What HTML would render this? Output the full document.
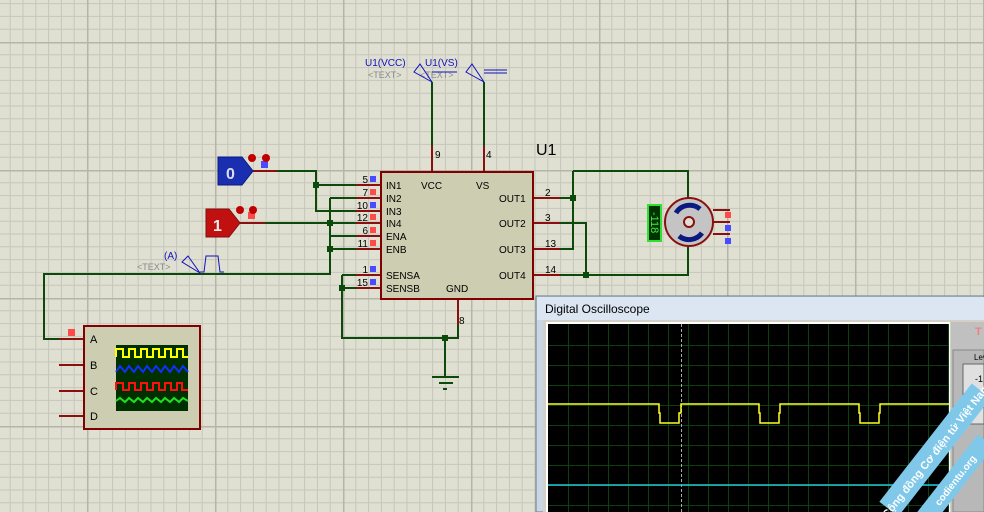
<!DOCTYPE html>
<html><head><meta charset="utf-8"><style>
html,body{margin:0;padding:0;width:984px;height:512px;overflow:hidden;background:#dfdfd2;}
svg{display:block;font-family:"Liberation Sans",sans-serif;}
</style></head><body>
<svg width="984" height="512" viewBox="0 0 984 512" xmlns="http://www.w3.org/2000/svg">
<defs>
<pattern id="g" x="87" y="42" width="128" height="128" patternUnits="userSpaceOnUse">
<rect width="128" height="128" fill="#dfdfd2"/>
<g stroke="#c6c6ba" stroke-width="1">
<path d="M12.8 0V128M25.6 0V128M38.4 0V128M51.2 0V128M64 0V128M76.8 0V128M89.6 0V128M102.4 0V128M115.2 0V128"/>
<path d="M0 12.8H128M0 25.6H128M0 38.4H128M0 51.2H128M0 64H128M0 76.8H128M0 89.6H128M0 102.4H128M0 115.2H128"/>
</g>
<path d="M0.5 0V128M0 0.5H128" stroke="#b4b4a8" stroke-width="2"/>
</pattern>
</defs>
<rect width="984" height="512" fill="url(#g)"/>

<!-- green wires -->
<g stroke="#0b4a0b" stroke-width="2" fill="none">
<path d="M277 171H316V211H356M316 185H356"/>
<path d="M265 223H356M330 198H356M330 198V274H44V339H59M330 236H356M330 249H356"/>
<path d="M342 275H356M342 275V338H458V325M342 288H356M445 338V377"/>
<path d="M432 82V146M484 82V146"/>
<path d="M560 198H573M573 171V249H560M573 171H688V198M560 223H586V275M560 275H688V247"/>
</g>
<g fill="#0b4a0b">
<rect x="313" y="182" width="6" height="6"/><rect x="327" y="220" width="6" height="6"/><rect x="327" y="246" width="6" height="6"/>
<rect x="339" y="285" width="6" height="6"/><rect x="442" y="335" width="6" height="6"/><rect x="570" y="195" width="6" height="6"/><rect x="583" y="272" width="6" height="6"/>
</g>
<!-- ground -->
<g stroke="#0b4a0b" stroke-width="2"><path d="M432 377H459M439 383H453M443 389H447"/></g>

<!-- IC pins -->
<g stroke="#8a1010" stroke-width="2">
<path d="M356 185H380M356 198H380M356 211H380M356 223H380M356 236H380M356 249H380M356 275H380M356 288H380"/>
<path d="M533 198H560M533 223H560M533 249H560M533 275H560"/>
<path d="M432 146V172M484 146V172M458 300V325"/>
<path d="M253 171H277M240 223H265M59 339H84M59 365H84M59 391H84M59 416H84"/>
</g>
<rect x="381" y="172" width="152" height="127" fill="#cdcdb1" stroke="#800000" stroke-width="2"/>
<g font-size="10" fill="#000">
<text x="386" y="189">IN1</text><text x="386" y="202">IN2</text><text x="386" y="215">IN3</text><text x="386" y="227">IN4</text>
<text x="386" y="240">ENA</text><text x="386" y="253">ENB</text><text x="386" y="279">SENSA</text><text x="386" y="292">SENSB</text>
<text x="421" y="189">VCC</text><text x="476" y="189">VS</text><text x="446" y="292">GND</text>
<text x="499" y="202">OUT1</text><text x="499" y="227">OUT2</text><text x="499" y="253">OUT3</text><text x="499" y="279">OUT4</text>
<g text-anchor="end"><text x="368" y="183">5</text><text x="368" y="196">7</text><text x="368" y="209">10</text><text x="368" y="221">12</text>
<text x="368" y="234">6</text><text x="368" y="247">11</text><text x="368" y="273">1</text><text x="368" y="286">15</text></g>
<text x="545" y="196">2</text><text x="545" y="221">3</text><text x="545" y="247">13</text><text x="545" y="273">14</text>
<text x="435" y="158">9</text><text x="486" y="158">4</text><text x="459" y="324">8</text>
</g>
<text x="536" y="155" font-size="16" fill="#000">U1</text>
<g>
<rect x="370" y="176" width="6" height="6" fill="#4a4aff"/><rect x="370" y="189" width="6" height="6" fill="#ff4a4a"/><rect x="370" y="202" width="6" height="6" fill="#4a4aff"/>
<rect x="370" y="214" width="6" height="6" fill="#ff4a4a"/><rect x="370" y="227" width="6" height="6" fill="#ff4a4a"/><rect x="370" y="240" width="6" height="6" fill="#ff4a4a"/>
<rect x="370" y="266" width="6" height="6" fill="#4a4aff"/><rect x="370" y="279" width="6" height="6" fill="#4a4aff"/>
<rect x="725" y="212" width="6" height="6" fill="#ff4a4a"/><rect x="725" y="225" width="6" height="6" fill="#4a4aff"/><rect x="725" y="238" width="6" height="6" fill="#4a4aff"/>
<rect x="261" y="161" width="7" height="7" fill="#4a4aff"/><rect x="248" y="212" width="7" height="7" fill="#ff4a4a"/>
<rect x="68" y="329" width="7" height="7" fill="#ff4a4a"/>
</g>

<!-- logic terminals -->
<polygon points="218,157 242,157 253,171 242,185 218,185" fill="#1a2fb0" stroke="#0a1a80"/>
<text x="226" y="179" font-size="16" font-weight="bold" fill="#dde">0</text>
<circle cx="252" cy="158" r="4" fill="#c00000"/><circle cx="266" cy="158" r="4" fill="#c00000"/>
<polygon points="206,209 229,209 240,223 229,237 206,237" fill="#c01010" stroke="#801010"/>
<text x="213" y="231" font-size="16" font-weight="bold" fill="#eee">1</text>
<circle cx="240" cy="210" r="4" fill="#c00000"/><circle cx="253" cy="210" r="4" fill="#c00000"/>

<!-- top labels -->
<g font-size="10" fill="#1010c0"><text x="365" y="66">U1(VCC)</text><text x="425" y="66">U1(VS)</text><text x="164" y="259">(A)</text></g>
<g font-size="9" fill="#8a8a8a"><text x="368" y="78">&lt;TEXT&gt;</text><text x="420" y="78">&lt;TEXT&gt;</text><text x="137" y="270">&lt;TEXT&gt;</text></g>
<g stroke="#1010c0" fill="none" stroke-width="1">
<path d="M432 82L414 72L420 64Z"/><path d="M484 82L466 72L472 64Z"/><path d="M484 70H507M484 73H507"/><path d="M432 72H457"/>
<path d="M200 273L182 262L188 256Z"/><path d="M200 272L204 272L206 256L218 256L220 272L224 272"/>
</g>

<!-- motor -->
<circle cx="689" cy="222" r="24" fill="#c4c4c4" stroke="#8a1010" stroke-width="2"/>
<circle cx="689" cy="222" r="5" fill="#dfdfd2" stroke="#8a1010" stroke-width="2"/>
<path d="M676 213A16 16 0 0 1 700 209" stroke="#0a1a80" stroke-width="5" fill="none"/>
<path d="M679 236A16 16 0 0 0 702 233" stroke="#0a1a80" stroke-width="5" fill="none"/>
<path d="M713 210H730M713 222H730M713 234H730" stroke="#8a1010" stroke-width="2"/>
<rect x="648" y="205" width="13" height="36" fill="#003300" stroke="#30e030" stroke-width="2"/>
<text x="0" y="0" font-size="11" fill="#40f040" transform="translate(651 212) rotate(90)">-118</text>

<!-- scope symbol -->
<rect x="84" y="326" width="116" height="103" fill="#cdcdb1" stroke="#800000" stroke-width="2"/>
<g font-size="11" fill="#000"><text x="90" y="343">A</text><text x="90" y="369">B</text><text x="90" y="395">C</text><text x="90" y="420">D</text></g>
<rect x="116" y="345" width="72" height="66" fill="#003000"/>
<g fill="none" stroke-width="2">
<path d="M116 357V349H123V357H129V349H135V357H141V349H147V357H153V349H159V357H165V349H171V357H177V349H183V357H188" stroke="#ffff00"/>
<path d="M116 372L120 366L125 372L129 366L134 372L138 366L143 372L147 366L152 372L156 366L161 372L165 366L170 372L174 366L179 372L183 366L188 372" stroke="#1030ff"/>
<path d="M116 390V383H123V390H129V383H135V390H141V383H147V390H153V383H159V390H165V383H171V390H177V383H182V390H188" stroke="#ff1010"/>
<path d="M116 401L120 398L125 402L129 398L134 402L138 398L143 402L147 398L152 402L156 398L161 402L165 398L170 402L174 398L179 402L183 398L188 401" stroke="#20e020"/>
</g>

<!-- oscilloscope window -->
<rect x="536" y="296" width="448" height="216" fill="#c8d6e6" stroke="#6a7a8a"/>
<rect x="537" y="297" width="447" height="23" fill="#dbe6f2"/>
<text x="545" y="313" font-size="12" fill="#000">Digital Oscilloscope</text>
<rect x="543" y="320" width="441" height="192" fill="#d4d0c8"/>
<rect x="546" y="322" width="404" height="190" fill="#fff"/>
<rect x="548" y="324" width="401" height="188" fill="#000"/>
<g stroke="#0e400e" stroke-width="1">
<path d="M568.5 324V512M588.5 324V512M608.5 324V512M628.5 324V512M648.5 324V512M668.5 324V512M688.5 324V512M708.5 324V512M728.5 324V512M748.5 324V512M768.5 324V512M788.5 324V512M808.5 324V512M828.5 324V512M848.5 324V512M868.5 324V512M888.5 324V512M908.5 324V512M928.5 324V512M948.5 324V512"/>
<path d="M548 345.5H949M548 365.5H949M548 385.5H949M548 405.5H949M548 425.5H949M548 445.5H949M548 465.5H949M548 485.5H949M548 505.5H949"/>
</g>
<path d="M681.5 324V512" stroke="#aaa" stroke-dasharray="3 2"/>
<path d="M548 404H659V413H660V423H679V413H681V404H759V413H760V423H779V413H780V404H859V413H860V423H879V413H880V404H949" stroke="#ffff20" stroke-width="1.5" fill="none"/>
<path d="M548 485H949" stroke="#20c8d8" stroke-width="1.5"/>
<rect x="951" y="322" width="33" height="190" fill="#c0c0c0"/>
<rect x="953" y="350" width="31" height="162" fill="#b8b8b8" stroke="#888"/>
<text x="974" y="360" font-size="8" fill="#000">Lev</text>
<rect x="963" y="364" width="21" height="60" fill="#e0e0e0" stroke="#666"/>
<text x="975" y="382" font-size="9" fill="#000">-1</text><text x="978" y="402" font-size="9" fill="#000">0</text>
<polygon points="963,394 968,399 963,404" fill="#e00000"/>
<text x="975" y="335" font-size="11" fill="#f08080" font-weight="bold">T</text>

<!-- watermark -->
<g transform="translate(935 450) rotate(-52)">
<rect x="-75" y="-12" width="150" height="24" fill="#7fc8ea"/>
<text x="0" y="5" font-size="11" font-weight="bold" fill="#fff" text-anchor="middle">Cộng đồng Cơ điện tử Việt Nam</text>
</g>
<g transform="translate(955 480) rotate(-52)">
<rect x="-50" y="-10" width="100" height="20" fill="#7fc8ea"/>
<text x="0" y="4" font-size="10" font-weight="bold" fill="#fff" text-anchor="middle">codientu.org</text>
</g>
</svg>
</body></html>
